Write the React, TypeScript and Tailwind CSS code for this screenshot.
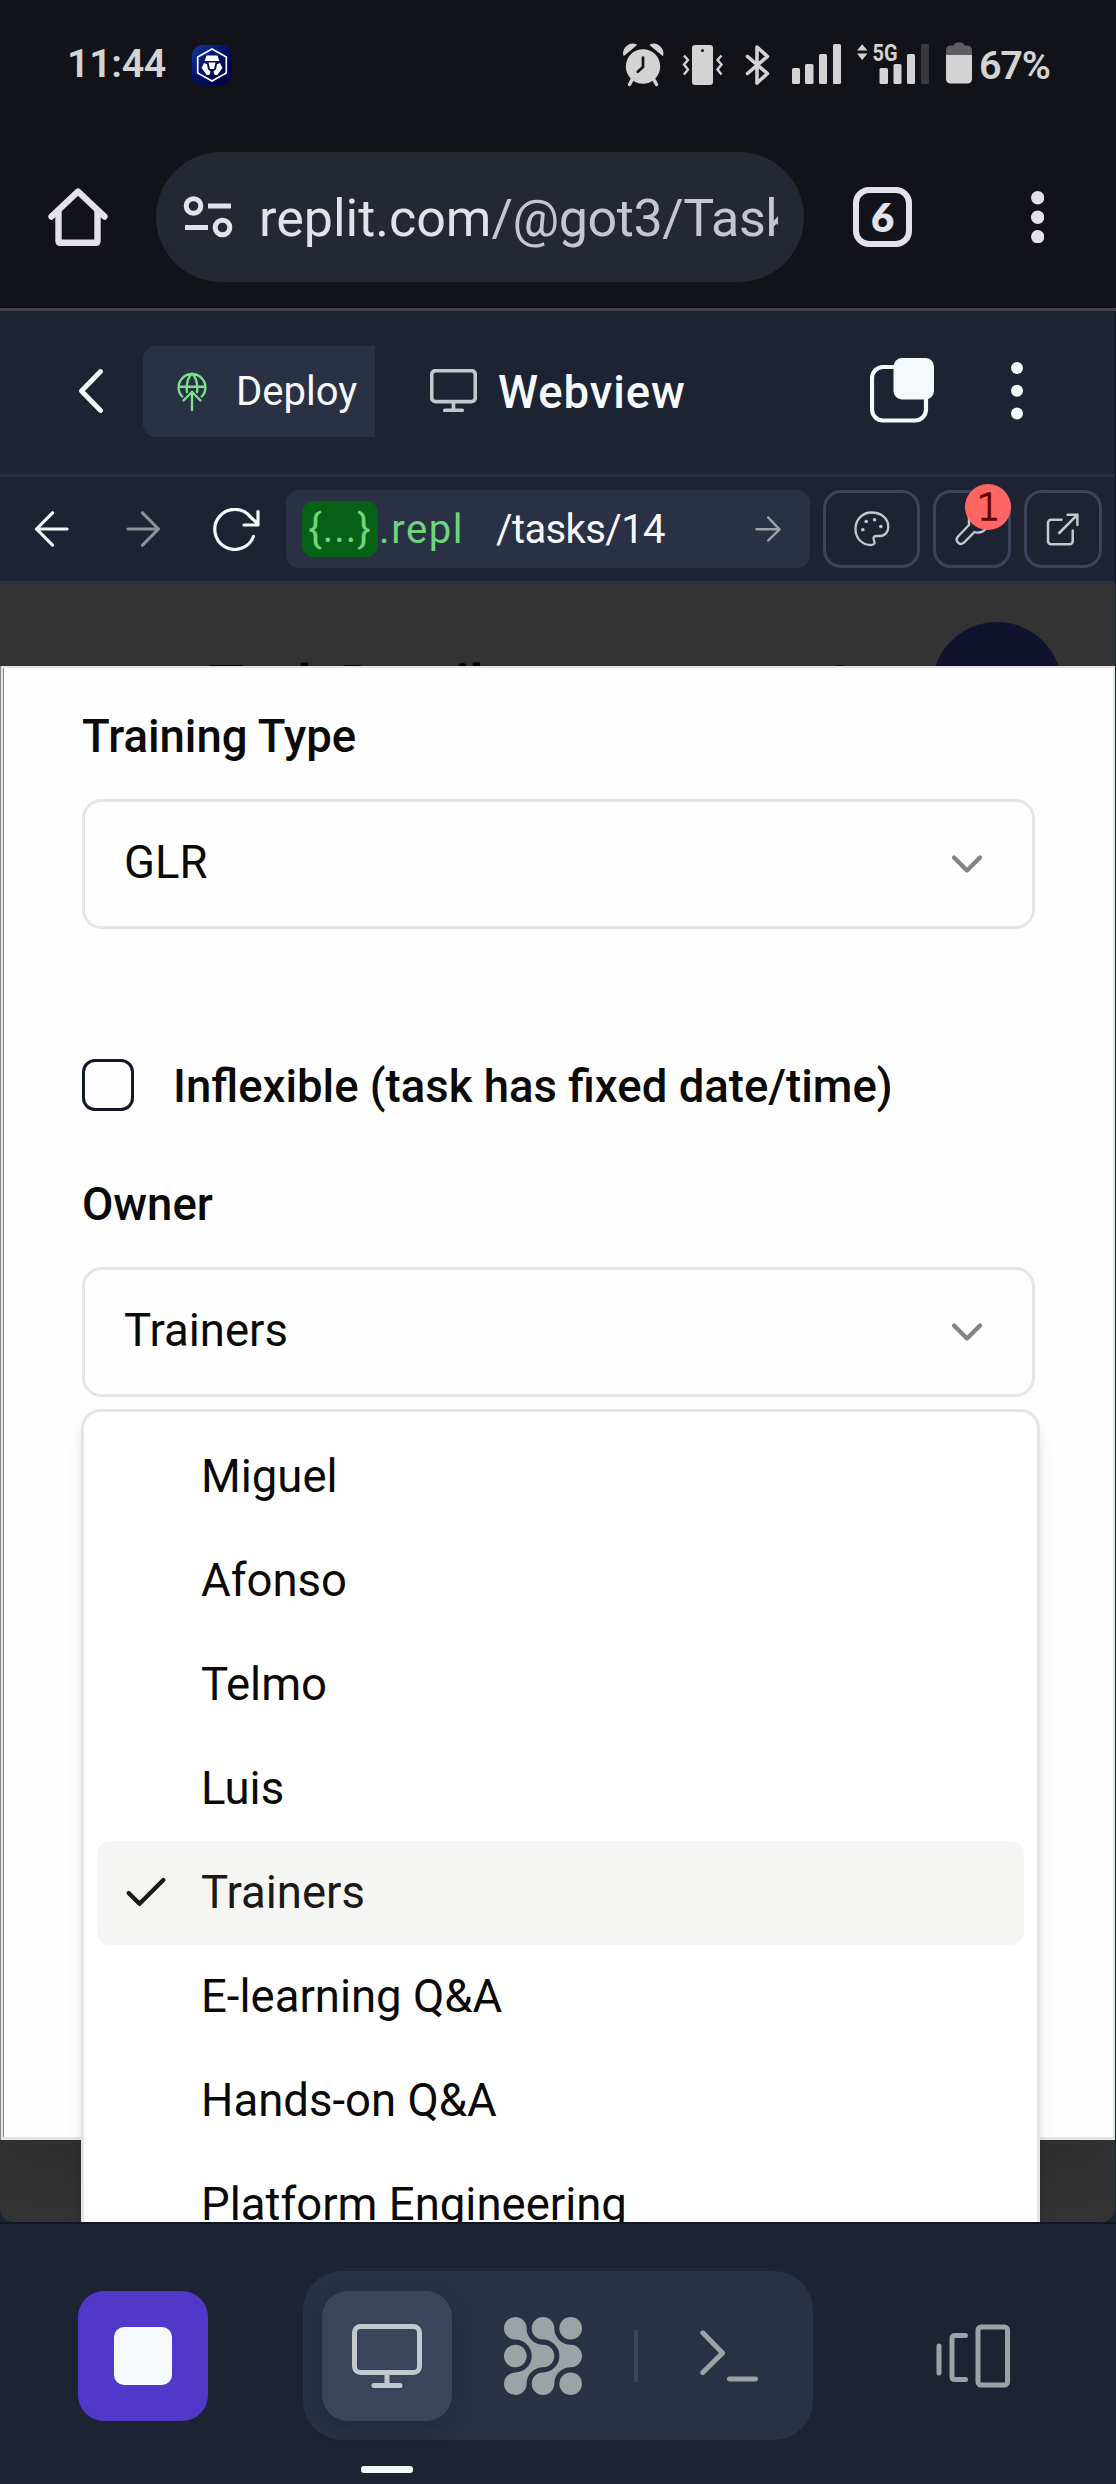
import React from "react";
import { Bell, Check, ChevronDown } from "lucide-react";

const owners = [
  "Miguel",
  "Afonso",
  "Telmo",
  "Luis",
  "Trainers",
  "E-learning Q&A",
  "Hands-on Q&A",
  "Platform Engineering",
];

function CryptoAppIcon() {
  return (
    <svg className="ml-[25px] mt-px size-10" viewBox="0 0 40 40">
      <defs>
        <linearGradient id="appBg" x1="0" y1="0" x2="1" y2="1">
          <stop offset="0" stopColor="#12389c" />
          <stop offset="0.5" stopColor="#020f66" />
          <stop offset="1" stopColor="#01013c" />
        </linearGradient>
      </defs>
      <rect width="40" height="40" rx="10" fill="url(#appBg)" />
      <path d="M20 4 34.3 12V28L20 36 5.700 28V12Z" fill="none" stroke="#fff" strokeWidth="1.6" />
      <path d="M14.500 10.500h11l1.800 5.500H12.700ZM16.500 17.500h7l-1.500 6.500h-4ZM12 18l3 1.200 1 5 2.600 2.600-1.300 3.200h-2.600L9.600 23ZM28 18l-3 1.200-1 5-2.600 2.600 1.300 3.200h2.600L30.400 23Z" fill="#fff" />
    </svg>
  );
}

function StatusIcons() {
  return (
    <svg className="h-[46px] w-[352px]" viewBox="622 41 352 46" fill="#d3d3d3">
      {/* alarm */}
      <circle cx="643" cy="66.500" r="17.200" />
      <path d="M624 55a9 9 0 0 1 12-10ZM662.500 55a9 9 0 0 0-12-10Z" stroke="#d3d3d3" strokeWidth="1.500" strokeLinejoin="round" />
      <path d="M632.500 79l-3 5.500M653.500 79l3 5.500" stroke="#d3d3d3" strokeWidth="3.500" strokeLinecap="round" />
      <path d="M643 57.500V67l-5.200 4.800" fill="none" stroke="#121318" strokeWidth="2.700" strokeLinecap="round" />
      {/* vibrating phone */}
      <rect x="692" y="45" width="21" height="40" rx="3" />
      <circle cx="702.500" cy="50.500" r="1.500" fill="#121318" />
      <path d="M684 55.500l4 4.500-4 4.500 4 5-4 5M721.500 55.500l-4 4.500 4 4.500-4 5 4 5" fill="none" stroke="#d3d3d3" strokeWidth="2.400" />
      {/* bluetooth */}
      <path d="M747.500 56.500l20 17-10.500 9.500V47l10.500 9.500-20 17" fill="none" stroke="#d3d3d3" strokeWidth="3.600" strokeLinejoin="round" strokeLinecap="round" />
      {/* signal, first sim */}
      <rect x="792" y="68" width="8" height="16" rx="1.500" />
      <rect x="805" y="64" width="8.500" height="20" rx="1.500" />
      <rect x="819" y="54" width="8" height="30" rx="1.500" />
      <rect x="833" y="44" width="8" height="40" rx="1.500" />
      {/* signal, second sim */}
      <path d="M857 50.500h10.500L862.200 44.200ZM857 53.500h10.500L862.200 60Z" />
      <text x="872.500" y="60.500" fontFamily="Roboto" fontWeight="700" fontSize="24" textLength="25" lengthAdjust="spacingAndGlyphs">5G</text>
      <rect x="879.500" y="68" width="8.500" height="16" rx="1.500" />
      <rect x="893.500" y="64" width="8" height="20" rx="1.500" />
      <rect x="907" y="54" width="8" height="30" rx="1.500" />
      <rect x="921" y="44" width="8" height="40" rx="1.500" fill="#37383d" />
      {/* battery */}
      <path d="M954 45.500q0-3 3-3h4q3 0 3 3h3q5 0 5 5V55h-26v-4.500q0-5 5-5Z" fill="#5f5e63" />
      <path d="M946 55h26v23.500q0 5-5 5h-16q-5 0-5-5Z" />
    </svg>
  );
}

function StatusBar() {
  return (
    <div className="flex h-[130px] items-start pl-[67px] pt-[44px] text-[#d3d3d3]">
      <span className="w-[100px] whitespace-nowrap text-[39.5px] font-semibold leading-[40px] tracking-[-0.4px]">11:44</span>
      <CryptoAppIcon />
      <div className="-mt-[3px] ml-[390px]">
        <StatusIcons />
      </div>
      <span className="ml-[5px] mt-[2px] whitespace-nowrap text-[39.5px] font-semibold leading-[40px] tracking-[-1.2px]">67%</span>
    </div>
  );
}

function MenuDots({ className, r, gap }: { className: string; r: number; gap: number }) {
  const h = gap * 2 + r * 2;
  return (
    <svg className={className} width={r * 2} height={h} viewBox={`0 0 ${r * 2} ${h}`} fill="currentColor">
      <circle cx={r} cy={r} r={r} />
      <circle cx={r} cy={r + gap} r={r} />
      <circle cx={r} cy={r + gap * 2} r={r} />
    </svg>
  );
}

function BrowserBar() {
  return (
    <div className="flex h-[178px] items-start pt-[22px] text-[#e3e2e9]">
      <svg className="ml-[48px] mt-[35px] h-[60px] w-[60px] shrink-0" viewBox="0 0 60 60" fill="none" stroke="currentColor" strokeWidth="6.400" strokeLinecap="round" strokeLinejoin="round">
        <path d="M3.500 29.500 30 4.500l26.500 25" />
        <path d="M10.500 25v29q0 1.800 1.800 1.800h35.400q1.800 0 1.800-1.800V25" />
      </svg>
      <div className="ml-[48px] flex h-[130px] w-[648px] shrink-0 items-center rounded-full bg-[#242832] pl-[27px]">
        <svg className="h-[42px] w-[50px] shrink-0" viewBox="0 0 50 42" fill="none" stroke="currentColor" strokeWidth="5">
          <circle cx="10.500" cy="10" r="7.300" />
          <path d="M25 10h23M2 31.500h23" />
          <circle cx="39.500" cy="31.500" r="7.300" />
        </svg>
        <div className="ml-[26px] mt-[3px] w-[519px] overflow-hidden whitespace-nowrap text-[52px] leading-[70px]">
          replit.com<span className="tracking-[-0.4px] text-[#c6c5d0]">/@got3/Task</span>
        </div>
      </div>
      <div className="ml-[49px] mt-[35px] flex h-[60px] w-[59px] shrink-0 items-center justify-center rounded-[16px] border-[6.5px] border-[#e3e2e9] font-['Lato'] text-[40px] font-extrabold leading-[40px]">
        6
      </div>
      <MenuDots className="ml-[119px] mt-[39px] shrink-0" r={6.700} gap={19.500} />
    </div>
  );
}

function MonitorIcon({ className, stroke }: { className: string; stroke: number }) {
  return (
    <svg className={className} viewBox="0 0 70 64" fill="none" stroke="#c2c8cc" strokeWidth={stroke} strokeLinecap="round" strokeLinejoin="round">
      <rect x="2.500" y="2.500" width="65" height="46" rx="6" />
      <path d="M35 49v12M22 61.500h26" />
    </svg>
  );
}

function AppHeader() {
  return (
    <div className="flex h-[166px] items-start border-b-[3px] border-[#2b3145] text-[#f5f9fc]">
      <svg className="ml-[79px] mt-[58px] h-[44px] w-[24px] shrink-0" viewBox="0 0 24 44" fill="none" stroke="currentColor" strokeWidth="4.800" strokeLinecap="round" strokeLinejoin="round">
        <path d="M21.500 2.500 2.500 22l19 19.500" />
      </svg>
      <div className="ml-[40px] mt-[35px] flex h-[91px] w-[232px] shrink-0 items-center rounded-l-[13px] bg-[#2b3145] pl-[34px]">
        <svg className="h-[39px] w-[30px] shrink-0" viewBox="0 0 30 39" fill="none" stroke="#7ae08b" strokeWidth="2.400" strokeLinecap="round">
          <path d="M5.200 24.500A13.400 13.400 0 1 1 24.800 24.500M1.600 14.800h26.800M10 20Q8.500 8 15 1.500M20 20Q21.500 8 15 1.500" />
          <path d="M15 38V21M6.500 28.500l8.500-8.500 8.500 8.500" />
        </svg>
        <span className="ml-[29px] mt-px text-[40px] leading-[48px]">Deploy</span>
      </div>
      <MonitorIcon className="ml-[55px] mt-[58px] h-[43px] w-[47px] shrink-0" stroke={5.500} />
      <span className="ml-[21px] mt-[54px] w-[191px] whitespace-nowrap text-[45.5px] font-medium leading-[56px] tracking-[0.9px]">Webview</span>
      <svg className="ml-[181px] mt-[47px] h-[65px] w-[64px] shrink-0" viewBox="0 0 64 65" fill="none">
        <rect x="2" y="9" width="54" height="53.500" rx="11" stroke="currentColor" strokeWidth="4.200" />
        <rect x="23.500" y="0" width="40.500" height="41.500" rx="8.500" fill="currentColor" />
      </svg>
      <MenuDots className="ml-[77px] mt-[51px] shrink-0" r={6} gap={22.800} />
    </div>
  );
}

function AddressRow() {
  return (
    <div className="flex h-[107px] items-start border-b-[3px] border-[#2b3145] pt-[13px] text-[#f5f9fc]">
      <div className="flex h-[78px] w-[286px] shrink-0 items-center">
        <svg className="ml-[34px] h-[36px] w-[35px]" viewBox="0 0 35 36" fill="none" stroke="currentColor" strokeWidth="3.200" strokeLinecap="round" strokeLinejoin="round">
          <path d="M33 18H2.500M18.500 1.800 2.500 18l16 16.200" />
        </svg>
        <svg className="ml-[57px] h-[36px] w-[35px]" viewBox="0 0 35 36" fill="none" stroke="#8d9196" strokeWidth="3.200" strokeLinecap="round" strokeLinejoin="round">
          <path d="M2 18h30.500M16.500 1.800 32.500 18l-16 16.200" />
        </svg>
        <svg className="ml-[51px] h-[43px] w-[49px]" viewBox="0 0 49 43" fill="none" stroke="currentColor" strokeWidth="3.200" strokeLinecap="round" strokeLinejoin="round">
          <path d="M41.500 28.500A20 20 0 1 1 38.500 9L46 16M46 3.500V17H32" />
        </svg>
      </div>
      <div className="flex h-[78px] w-[524px] shrink-0 items-center rounded-[13px] bg-[#2b3145] pl-[16px] text-[40px] leading-[56px]">
        <span className="flex h-[56px] w-[76px] shrink-0 items-center justify-center rounded-[12px] bg-[#056214] tracking-[1px] text-[#6cd57e]">{"{...}"}</span>
        <span className="w-[118px] shrink-0 pl-px pt-[2px] tracking-[1.600px] text-[#6cd57e]">.repl</span>
        <span className="w-[259px] shrink-0 pt-[2px] tracking-[-0.6px]">/tasks/14</span>
        <svg className="h-[26px] w-[26px]" viewBox="0 0 26 26" fill="none" stroke="#9da2a6" strokeWidth="2.400" strokeLinecap="round" strokeLinejoin="round">
          <path d="M1.500 13.300h23M13.200 1.500 24.500 13.300 13.200 24.500" />
        </svg>
      </div>
      <div className="ml-[13px] flex h-[78px] w-[97px] shrink-0 items-center justify-center rounded-[18px] border-[3px] border-[#3c445c]">
        <svg className="size-[36px]" viewBox="0 0 36 36" fill="none" stroke="#c2c8cc" strokeWidth="2.300">
          <path d="M17.500 1.500C8 1.500 1.500 9 1.500 18c0 10 7.500 16 15.500 16 3.500 0 4-2 3.200-4-1.400-3-.7-5 2-5H26c5 0 8.300-4 8.300-9 0-9-7.500-14.500-16.800-14.500Z" />
          <g fill="#c2c8cc" stroke="none">
            <circle cx="12.200" cy="10.500" r="1.800" />
            <circle cx="20.500" cy="8.800" r="1.800" />
            <circle cx="26.800" cy="15.500" r="1.800" />
            <circle cx="8.800" cy="18.800" r="1.800" />
          </g>
        </svg>
      </div>
      <div className="relative ml-[13px] flex h-[78px] w-[78px] shrink-0 rounded-[18px] border-[3px] border-[#3c445c]">
        <svg className="ml-[19px] mt-[17px] h-[36px] w-[36px]" viewBox="0 0 36 36" fill="none" stroke="#c2c8cc" strokeWidth="2.400" strokeLinejoin="round">
          <path d="M14 6v9L3 26.500C-.5 31 4.500 36 8.700 32.800L19.500 22c3.500 1.500 8.500.5 12-4" />
        </svg>
        <span className="absolute -right-[3px] -top-[9px] flex size-[46px] items-center justify-center rounded-full bg-[#ff6663] pl-px font-['DejaVu_Sans'] text-[38px] font-extralight leading-[46px] text-[#600000] [-webkit-text-stroke:1.4px_#600000]">
          1
        </span>
      </div>
      <div className="ml-[13px] flex h-[78px] w-[78px] shrink-0 rounded-[18px] border-[3px] border-[#3c445c]">
        <svg className="ml-[19px] mt-[20px] h-[34px] w-[34px]" viewBox="0 0 34 34" fill="none" stroke="#c2c8cc" strokeWidth="2.500" strokeLinecap="round">
          <path d="M15.500 6.700H5a3 3 0 0 0-3 3v18.600a3 3 0 0 0 3 3h18.700a3 3 0 0 0 3-3V17.500M13.200 20 31.300 1.800M21.500 1.800h9.900V12" />
        </svg>
      </div>
    </div>
  );
}

function SelectBox({ value }: { value: string }) {
  return (
    <div className="mt-[39px] flex h-[130px] w-[953px] items-center justify-between rounded-[19.5px] border-[3px] border-[#e5e5e3] px-[39px]">
      <span className="pb-[3px] text-[45.5px] leading-[65px]">{value}</span>
      <ChevronDown className="size-[52px] text-[#848484]" />
    </div>
  );
}

function TaskPage() {
  return (
    <div className="bg-[#1d2333]">
      <div className="relative mr-px h-[1638px] overflow-hidden rounded-b-[14px] bg-[#333333]">
        <div className="flex h-[205px] items-center pl-[208px] text-[#030303]">
          <span className="w-[606px] whitespace-nowrap pt-px text-[58.5px] font-semibold leading-[65px] tracking-[-1.4px]">Task Details</span>
          <Bell className="mt-[4px] size-[52px]" />
          <div className="ml-[66px] size-[130px] rounded-full bg-[#11122d]" />
        </div>

        <div className="absolute left-px top-[82px] h-[1474px] w-[1114px] border-2 border-b-[3px] border-[#e5e5e3] bg-[#fefefe] pl-[79px] pt-[46px] text-[45.5px] text-[#0b0a09] shadow-[-1px_0_0_#8a8886,inset_1px_0_0_#8a8886,0_32px_49px_-10px_rgba(0,0,0,0.12)]">
          <p className="font-medium leading-[46px]">Training Type</p>
          <SelectBox value="GLR" />
          <div className="mt-[130px] flex h-[52px] items-center">
            <span className="size-[52px] rounded-[13px] border-[3px] border-[#10172a]" />
            <span className="ml-[39px] mt-[3px] whitespace-nowrap font-medium leading-[46px]">Inflexible (task has fixed date/time)</span>
          </div>
          <p className="mt-[71px] font-medium leading-[46px]">Owner</p>
          <SelectBox value="Trainers" />
        </div>

        <ul className="absolute left-[81px] top-[825px] h-[1000px] w-[959px] rounded-[19.5px] border-[3px] border-[#e5e5e3] bg-white p-[13px] text-[45.5px] text-[#0b0a09] shadow-[0_13px_19px_-3px_rgba(0,0,0,0.1),0_6px_13px_-6px_rgba(0,0,0,0.1)]">
          {owners.map((name) => {
            const selected = name === "Trainers";
            return (
              <li
                key={name}
                className={
                  selected
                    ? "flex h-[104px] items-center rounded-[13px] bg-[#f5f5f4] text-[#1c1917]"
                    : "flex h-[104px] items-center"
                }
              >
                <span className="flex w-[104px] shrink-0 pl-[23px]">{selected && <Check className="size-[52px]" />}</span>
                <span className="whitespace-nowrap pb-[2px] leading-[65px]">{name}</span>
              </li>
            );
          })}
        </ul>
      </div>
    </div>
  );
}

function AgentIcon() {
  const wave =
    "M22.600 11.300A16.400 16.400 0 0 0 39 27.700A11.300 11.300 0 0 1 39 50.300A16.400 16.400 0 0 0 22.600 66.700A11.300 11.300 0 1 1 11.300 55.400A16.400 16.400 0 0 0 11.300 22.600A11.300 11.300 0 1 1 22.600 11.300Z";
  return (
    <svg className="size-[78px]" viewBox="0 0 78 78" fill="#9da2a6">
      <path d={wave} />
      <path d={wave} transform="translate(27.700 0)" />
      <circle cx="11.300" cy="39" r="11.300" />
      <circle cx="66.700" cy="11.300" r="11.300" />
      <circle cx="66.700" cy="66.700" r="11.300" />
    </svg>
  );
}

function BottomBar() {
  return (
    <div className="h-[262px] border-t-2 border-[#0e1525] pt-[47px]">
      <div className="flex h-[169px] items-center">
        <div className="ml-[78px] flex size-[130px] items-center justify-center rounded-[26px] bg-[#5238c8]">
          <div className="size-[58px] rounded-[10px] bg-[#f5f9fc]" />
        </div>
        <div className="ml-[95px] flex h-[169px] w-[510px] items-center rounded-[39px] bg-[#2b3145] pl-[19px]">
          <div className="flex size-[130px] shrink-0 items-center justify-center rounded-[26px] bg-[#3c445c] shadow-[0_8px_20px_rgba(14,21,37,0.28)]">
            <MonitorIcon className="h-[64px] w-[70px]" stroke={5} />
          </div>
          <div className="flex w-[182px] shrink-0 pl-[52px]">
            <AgentIcon />
          </div>
          <div className="h-[52px] w-[4px] shrink-0 bg-[#3c445c]" />
          <svg className="ml-[62px] h-[52px] w-[58px]" viewBox="0 0 58 52" fill="none" stroke="#9da2a6" strokeWidth="5" strokeLinecap="round" strokeLinejoin="round">
            <path d="M2.800 2.800 22.500 23 2.800 42.500M29.500 49H55.500" />
          </svg>
        </div>
        <svg className="ml-[123px] h-[64px] w-[74px]" viewBox="0 0 74 64" fill="none" stroke="#9da2a6" strokeWidth="5" strokeLinecap="round" strokeLinejoin="round">
          <path d="M3 22v27M29.500 11.500H19q-3 0-3 3v38q0 3 3 3h10.500" />
          <rect x="42" y="3" width="29.500" height="58" rx="3" />
        </svg>
      </div>
      <div className="ml-[361px] mt-[26px] h-[7px] w-[52px] rounded-[3px] bg-[#f5f9fc]" />
    </div>
  );
}

export default function App() {
  return (
    <div className="h-[2484px] w-[1116px] overflow-hidden bg-[#121318] font-['Roboto',sans-serif]">
      <StatusBar />
      <BrowserBar />
      <div className="h-[3px] bg-[#44444e]" />
      <div className="border-r border-[#0e1525] bg-[#1d2333]">
        <AppHeader />
        <AddressRow />
      </div>
      <TaskPage />
      <div className="bg-[#1d2333]">
        <BottomBar />
      </div>
    </div>
  );
}
